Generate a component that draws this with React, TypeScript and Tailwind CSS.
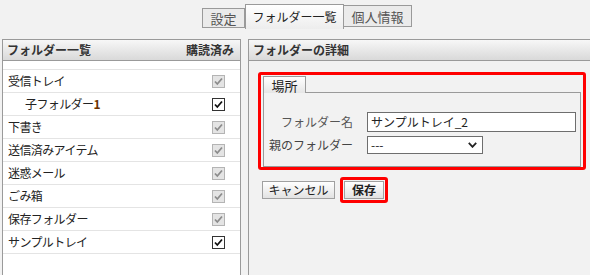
import React from "react";

const font = { fontFamily: '"Noto Sans CJK JP", "Noto Sans", sans-serif' };

function Check({ enabled }: { enabled: boolean }) {
  return (
    <svg width="13" height="13" viewBox="0 0 13 13" className="block">
      <rect
        x="0.5"
        y="0.5"
        width="12"
        height="12"
        fill={enabled ? "#ffffff" : "#e4e4e4"}
        stroke={enabled ? "#333333" : "#b4b4b4"}
      />
      <path
        d="M3 6.5 L5.3 9 L10 3.5"
        fill="none"
        stroke={enabled ? "#111111" : "#8c8c8c"}
        strokeWidth="1.8"
      />
    </svg>
  );
}

const rows: { name: React.ReactNode; enabled: boolean; indent?: boolean }[] = [
  { name: "受信トレイ", enabled: false },
  {
    name: (
      <>
        子フォルダー<span className="text-[#6b3300] font-bold">1</span>
      </>
    ),
    enabled: true,
    indent: true,
  },
  { name: "下書き", enabled: false },
  { name: "送信済みアイテム", enabled: false },
  { name: "迷惑メール", enabled: false },
  { name: "ごみ箱", enabled: false },
  { name: "保存フォルダー", enabled: false },
  { name: "サンプルトレイ", enabled: true },
];

export default function App() {
  return (
    <div
      className="w-[590px] h-[275px] overflow-hidden bg-[#f2f2f2] text-[12px] leading-none text-[#222]"
      style={font}
    >
      {/* tabs */}
      <div className="h-[39px] flex items-start pl-[202px]">
        <div className="mt-[8px] h-[20px] w-[43px] flex items-center justify-center border border-[#9a9a9a] bg-[#ebebeb] text-[#555] text-[13px]">
          設定
        </div>
        <div className="mt-[4px] h-[25px] w-[99px] flex items-center justify-center border border-b-0 border-[#9a9a9a] bg-gradient-to-b from-[#ffffff] to-[#ededed] text-[#222] text-[12px]">
          フォルダー一覧
        </div>
        <div className="mt-[5px] h-[22px] w-[68px] flex items-center justify-center border border-l-0 border-[#9a9a9a] bg-[#ebebeb] text-[#555] text-[13px]">
          個人情報
        </div>
      </div>

      <div className="flex items-start h-[236px]">
        {/* left panel */}
        <div className="ml-[2px] w-[239px] h-[236px] flex flex-col border-x border-[#9a9a9a]">
          <div className="h-[22px] shrink-0 flex items-center justify-between px-[4px] border-y border-[#9a9a9a] bg-gradient-to-b from-[#f7f7f7] to-[#d9d9d9] font-bold text-[#333]">
            <span>フォルダー一覧</span>
            <span className="pr-[2px]">購読済み</span>
          </div>
          <div className="flex-1 bg-white">
            <div className="h-[9px] border-b border-[#e4e4e4]" />
            {rows.map((r, i) => (
              <div
                key={i}
                className="h-[23px] flex items-center justify-between border-b border-[#e4e4e4] pr-[15px]"
              >
                <span className={(r.indent ? "pl-[22px]" : "pl-[5px]") + " tracking-[-0.6px]"}>{r.name}</span>
                <Check enabled={r.enabled} />
              </div>
            ))}
          </div>
        </div>

        {/* right panel */}
        <div className="ml-[7px] flex-1 h-[236px] flex flex-col border-l border-[#9a9a9a]">
          <div className="h-[22px] shrink-0 flex items-center px-[4px] border-y border-[#9a9a9a] bg-gradient-to-b from-[#f7f7f7] to-[#d9d9d9] font-bold text-[#333]">
            フォルダーの詳細
          </div>
          <div className="flex-1 pl-[9px] pt-[11px]">
            {/* red box */}
            <div className="w-[328px] h-[98px] border-[3px] border-[#ff0000] rounded-[3px] pl-[2px] pr-[2px] pt-[1px]">
              <div className="h-[91px] flex flex-col">
                <div className="flex items-end h-[17px]">
                  <div className="h-[17px] w-[43px] flex items-center justify-center border border-b-0 border-[#9a9a9a] bg-gradient-to-b from-[#ffffff] to-[#e6e6e6] text-[#222] text-[13px]">
                    場所
                  </div>
                  <div className="flex-1 border-b border-[#9a9a9a]" />
                </div>
                <div className="flex-1 border-x border-b border-[#9a9a9a] pt-[19px] flex flex-col gap-[4px]">
                  <div className="flex items-center">
                    <div className="w-[89px] text-right text-[#555]">フォルダー名</div>
                    <div className="ml-[14px] w-[209px] h-[20px] border border-[#6e6e6e] bg-white flex items-center pl-[3px] text-[#222]">
                      サンプルトレイ_2
                    </div>
                  </div>
                  <div className="flex items-center">
                    <div className="w-[89px] text-right text-[#444]">親のフォルダー</div>
                    <div className="ml-[14px] w-[116px] h-[18px] border border-[#6e6e6e] bg-white flex items-center justify-between pl-[3px] pr-[5px] text-[#222]">
                      <span>---</span>
                      <svg width="9" height="6" viewBox="0 0 9 6" className="block">
                        <path d="M0.8 0.8 L4.5 4.8 L8.2 0.8" fill="none" stroke="#222" strokeWidth="1.8" />
                      </svg>
                    </div>
                  </div>
                </div>
              </div>
            </div>

            {/* buttons */}
            <div className="flex items-center mt-[7px]">
              <div className="ml-[4px] w-[73px] h-[18px] flex items-center justify-center border border-[#a0a0a0] bg-gradient-to-b from-[#ffffff] to-[#e2e2e2] text-[#222]">
                キャンセル
              </div>
              <div className="ml-[5px] w-[48px] h-[26px] border-[3px] border-[#ff0000] rounded-[3px] flex items-center justify-center">
                <div className="w-[40px] h-[18px] flex items-center justify-center border border-[#a0a0a0] bg-gradient-to-b from-[#ffffff] to-[#e2e2e2] font-bold text-[#222]">
                  保存
                </div>
              </div>
            </div>
          </div>
        </div>
      </div>
    </div>
  );
}
